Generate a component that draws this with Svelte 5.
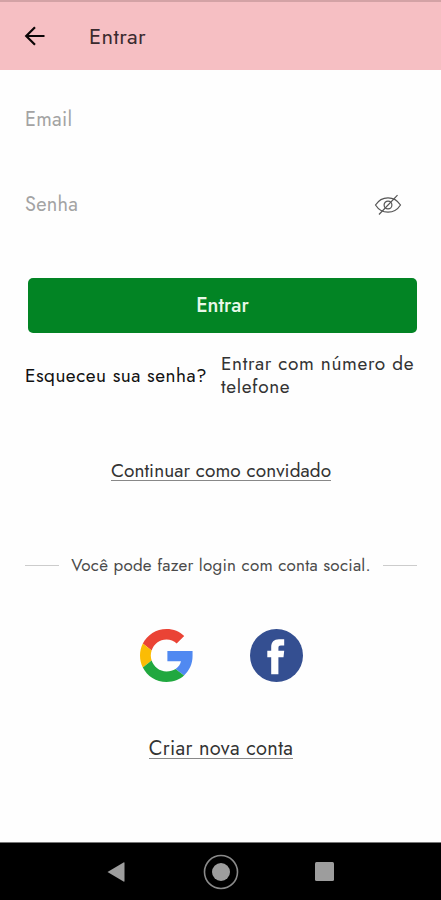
<script lang="ts">
  let email = $state("");
  let password = $state("");
  let showPassword = $state(false);
</script>

<div class="screen">
  <header>
    <button class="back" aria-label="Voltar">
      <svg width="22" height="22" viewBox="0 0 22 22">
        <path d="M20.5 11H2.5M11 2.2L2.2 11l8.8 8.8" />
      </svg>
    </button>
    <h1>Entrar</h1>
  </header>

  <main>
    <form onsubmit={(e) => e.preventDefault()}>
      <div class="field">
        <input type="text" placeholder="Email" bind:value={email} />
      </div>
      <div class="field">
        <input
          type={showPassword ? "text" : "password"}
          placeholder="Senha"
          bind:value={password}
        />
        <button
          type="button"
          class="eye"
          aria-label="Mostrar senha"
          onclick={() => (showPassword = !showPassword)}
        >
          <svg width="28" height="22" viewBox="0 0 28 22">
            <path d="M1.5 11C4.5 6.3 9 3.8 14 3.8S23.5 6.3 26.5 11C23.5 15.7 19 18.2 14 18.2S4.5 15.7 1.5 11z" />
            <circle cx="14" cy="11" r="3.9" />
            <path d="M5 20.5L23.5 1.2" />
          </svg>
        </button>
      </div>
      <button type="submit" class="submit">Entrar</button>
    </form>

    <div class="options">
      <a href="#forgot" class="forgot">Esqueceu sua senha?</a>
      <a href="#phone" class="phone">Entrar com número de<br />telefone</a>
    </div>

    <a href="#guest" class="link guest">Continuar como convidado</a>

    <div class="divider"><span>Você pode fazer login com conta social.</span></div>

    <div class="social">
      <button aria-label="Google">
        <svg width="53" height="53" viewBox="0 0 48 48">
          <path fill="#ea4335" d="M24 9.5c3.54 0 6.71 1.22 9.21 3.6l6.85-6.85C35.9 2.38 30.47 0 24 0 14.62 0 6.51 5.38 2.56 13.22l7.98 6.19C12.43 13.72 17.74 9.5 24 9.5z" />
          <path fill="#5089f1" d="M47.6 20H24.8v9.1h12.3c-.58 2.7-2.1 4.9-4.94 7.1l7.73 6c4.7-4.3 7.71-10.5 7.71-17.65z" />
          <path fill="#fbbc05" d="M10.53 28.59c-.48-1.45-.76-2.99-.76-4.59s.27-3.14.76-4.59l-7.98-6.19C.92 16.46 0 20.12 0 24s.92 7.54 2.56 10.78l7.97-6.19z" />
          <path fill="#20a83f" d="M24 48c6.48 0 11.93-2.13 15.89-5.81l-7.73-6c-2.15 1.45-4.92 2.3-8.16 2.3-6.26 0-11.57-4.22-13.47-9.91l-7.98 6.19C6.51 42.62 14.62 48 24 48z" />
        </svg>
      </button>
      <button aria-label="Facebook">
        <svg width="53" height="53" viewBox="0 0 53 53">
          <circle cx="26.5" cy="26.5" r="26.5" fill="#344f91" />
          <path fill="#fff" d="M21.2 45.2V28.2h-3.9v-6.4h3.9v-3.6c0-5.2 2.7-8 7.8-8h5.2v6.3h-3.3c-1.9 0-2.5.8-2.5 2.5v2.8h5.8l-.7 6.4h-5.1v17z" />
        </svg>
      </button>
    </div>

    <a href="#create" class="link create">Criar nova conta</a>
  </main>

  <nav>
    <svg width="18" height="20" viewBox="0 0 18 20">
      <path d="M.5 10L16.5 .5Q17.5 0 17.5 1v18q0 1-1 .5z" />
    </svg>
    <svg width="36" height="36" viewBox="0 0 36 36">
      <circle cx="18" cy="18" r="16.5" class="ring" />
      <circle cx="18" cy="18" r="9" />
    </svg>
    <svg width="19" height="19" viewBox="0 0 19 19">
      <rect width="19" height="19" rx="1.5" />
    </svg>
  </nav>
</div>

<style>
  :global(body) {
    margin: 0;
    background: #fff;
  }
  .screen {
    width: 441px;
    height: 900px;
    display: flex;
    flex-direction: column;
    overflow: hidden;
    background: #fefefe;
    color: #333;
    font-family: Jost, Lato, sans-serif;
    font-size: 19px;
  }
  button {
    padding: 0;
    border: 0;
    background: none;
    font: inherit;
    cursor: pointer;
  }
  svg {
    display: block;
  }
  a {
    color: inherit;
    text-decoration: none;
    white-space: nowrap;
  }
  header {
    box-sizing: border-box;
    height: 70px;
    flex: none;
    display: flex;
    align-items: center;
    gap: 43px;
    padding-left: 24px;
    background: #f6bfc3;
    border-top: 2px solid #d3a2a5;
  }
  .back path {
    fill: none;
    stroke: #0b0506;
    stroke-width: 2.2;
  }
  h1 {
    margin: 0;
    font-size: 22px;
    font-weight: 400;
    letter-spacing: 0.4px;
    color: #3a2a2e;
  }
  main {
    flex: 1;
    display: flex;
    flex-direction: column;
    padding: 0 24px 0 25px;
  }
  .field {
    height: 85px;
    display: flex;
    align-items: center;
  }
  .field:first-child {
    margin-top: 7px;
  }
  input {
    flex: 1;
    min-width: 0;
    padding: 0;
    border: 0;
    outline: 0;
    background: none;
    font: inherit;
    font-size: 20px;
    letter-spacing: 0.25px;
  }
  input::placeholder {
    color: #a3a3a3;
    opacity: 1;
  }
  .eye {
    margin-right: 15px;
  }
  .eye path,
  .eye circle {
    fill: none;
    stroke: #555;
    stroke-width: 1.2;
  }
  .submit {
    display: block;
    width: 389px;
    height: 55px;
    margin: 31px 0 0 3px;
    border-radius: 5px;
    background: #028424;
    color: #e9f8e9;
    font-size: 20px;
    font-weight: 500;
  }
  .options {
    display: flex;
    align-items: center;
    height: 46px;
    margin-top: 19px;
  }
  .forgot {
    width: 196px;
    color: #111;
    letter-spacing: 0.49px;
  }
  .phone {
    line-height: 23px;
    letter-spacing: 0.64px;
  }
  .link {
    align-self: center;
    border-bottom: 1px solid #888;
    line-height: 19px;
  }
  .guest {
    margin-top: 63px;
    letter-spacing: 0.08px;
  }
  .divider {
    display: flex;
    align-items: center;
    gap: 12px;
    height: 24px;
    margin-top: 72px;
    font-size: 17px;
    letter-spacing: 0.23px;
    color: #4a4a4a;
    white-space: nowrap;
  }
  .divider::before,
  .divider::after {
    content: "";
    flex: 1;
    height: 1px;
    background: #ccc;
  }
  .social {
    display: flex;
    justify-content: center;
    gap: 57px;
    height: 53px;
    margin-top: 52px;
  }
  .create {
    margin-top: 57px;
    font-size: 20px;
    letter-spacing: 0.33px;
  }
  nav {
    box-sizing: border-box;
    height: 58px;
    flex: none;
    display: flex;
    align-items: center;
    padding-left: 107px;
    background: #000;
    border-top: 1px solid #777;
  }
  nav svg {
    fill: #9d9d9d;
  }
  nav svg:nth-child(2) {
    margin: 0 76px 0 78px;
  }
  nav .ring {
    fill: none;
    stroke: #8a8a8a;
    stroke-width: 1.6;
  }
</style>
